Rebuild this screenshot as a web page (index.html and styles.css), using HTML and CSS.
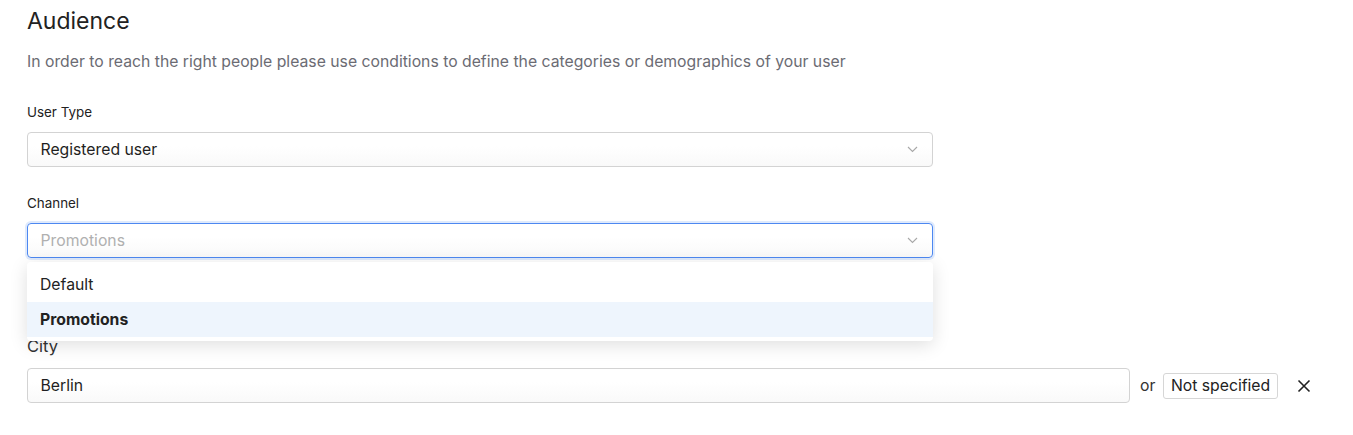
FILE: index.html
```html
<!DOCTYPE html>
<html>
  <head>
    <link rel="stylesheet" href="styles.css">
  </head>
  <body>
    <div class="audience">
      <h1 class="title">Audience</h1>
      <p class="intro">In order to reach the right people please use conditions to define the categories or demographics of your user</p>

      <div class="field">
        <label class="field-label">User Type</label>
        <div class="select">
          <span class="select-value">Registered user</span>
          <svg class="chevron" width="11" height="7" viewBox="0 0 11 7"><path d="M1 1l4.5 4.5L10 1" fill="none" stroke="#a8a8a8" stroke-width="1.1"/></svg>
        </div>
      </div>

      <div class="field field-channel">
        <label class="field-label">Channel</label>
        <div class="select focused">
          <span class="select-value placeholder">Promotions</span>
          <svg class="chevron" width="11" height="7" viewBox="0 0 11 7"><path d="M1 1l4.5 4.5L10 1" fill="none" stroke="#a8a8a8" stroke-width="1.1"/></svg>
        </div>
        <ul class="menu">
          <li class="menu-item">Default</li>
          <li class="menu-item selected">Promotions</li>
        </ul>
      </div>

      <div class="field field-city">
        <label class="field-label big">City</label>
        <div class="city-row">
          <div class="text-input">Berlin</div>
          <span class="or">or</span>
          <span class="chip">Not specified</span>
          <svg class="remove" width="14" height="14" viewBox="0 0 14 14"><path d="M1.5 1.5l11 11M12.5 1.5l-11 11" stroke="#222" stroke-width="1.6"/></svg>
        </div>
      </div>
    </div>
  </body>
</html>
```

FILE: styles.css
```css
* {
  box-sizing: border-box;
  margin: 0;
  padding: 0;
}

body {
  font-family: Inter, "Noto Sans", sans-serif;
  color: #1f1f22;
  background: #fff;
}

.audience {
  padding: 7px 0 0 27px;
}

.title {
  font-size: 23px;
  font-weight: 400;
  line-height: 28px;
  color: #222;
}

.intro {
  margin-top: 16px;
  font-size: 15.75px;
  line-height: 22px;
  color: #6b6b73;
}

.field {
  width: 906px;
}

.field:first-of-type {
  margin-top: 30px;
}

.field-label {
  display: block;
  font-size: 13.4px;
  line-height: 18px;
  color: #222;
  margin-bottom: 11px;
}

.field-label.big {
  font-size: 16.5px;
  line-height: 20px;
  color: #333;
  margin-bottom: 12px;
}

.field-channel {
  margin-top: 27px;
  position: relative;
}

.field-city {
  width: auto;
  margin-top: 78px;
}

.select, .text-input {
  height: 35px;
  border: 1px solid #d3d3d3;
  border-radius: 4px;
  background: linear-gradient(#fff 40%, #f9f9f9);
  display: flex;
  align-items: center;
  padding: 0 13px 0 12.5px;
  font-size: 15.75px;
}

.select-value {
  flex: 1;
}

.placeholder {
  color: #b0b0b0;
}

.chevron {
  margin-right: 1px;
}

.select.focused {
  border-color: #4d88f1;
  box-shadow: 0 0 0 2px rgba(77, 136, 241, 0.18);
}

.menu {
  list-style: none;
  position: absolute;
  left: 0;
  right: 0;
  top: 68px;
  padding: 5px 0 4px;
  background: #fff;
  border-radius: 4px;
  box-shadow: 0 4px 18px rgba(0, 0, 0, 0.13);
  z-index: 2;
}

.menu-item {
  height: 35px;
  line-height: 35px;
  padding: 0 13px;
  font-size: 15.75px;
  color: #222;
}

.menu-item.selected {
  background: #eef5fd;
  font-weight: 700;
}

.city-row {
  display: flex;
  align-items: center;
}

.text-input {
  width: 1103px;
}

.or {
  font-size: 15.75px;
  margin-left: 10px;
  color: #333;
}

.chip {
  margin-left: 8px;
  height: 26px;
  line-height: 24px;
  padding: 0 6.5px;
  border: 1px solid #d6d6d6;
  border-radius: 3px;
  font-size: 15.75px;
  color: #222;
}

.remove {
  margin-left: 19px;
}
```
